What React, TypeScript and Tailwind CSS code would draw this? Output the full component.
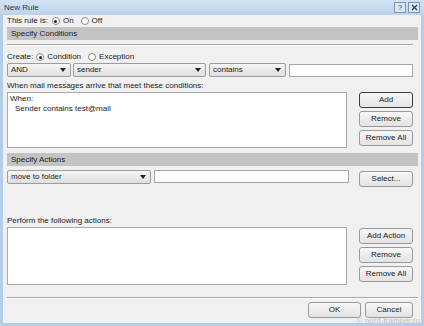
import React from "react";

function Radio({ checked }: { checked?: boolean }) {
	return (
		<span className="inline-flex w-[8px] h-[8px] rounded-full border border-[#8a8a8a] bg-white items-center justify-center mr-[3px]">
			{checked && <span className="w-[3px] h-[3px] rounded-full bg-[#222]" />}
		</span>
	);
}

function Dropdown({ label, className }: { label: string; className: string }) {
	return (
		<div
			className={
				"h-[14px] flex items-center justify-between pl-[3px] pr-[4px] border border-[#9c9c9c] rounded-[2px] bg-gradient-to-b from-[#f6f6f6] to-[#dedede] " +
				className
			}
		>
			<span>{label}</span>
			<svg width="6" height="4" viewBox="0 0 6 4">
				<path d="M0 0h6L3 4z" fill="#222" />
			</svg>
		</div>
	);
}

function Button({ label, def, className }: { label: string; def?: boolean; className?: string }) {
	return (
		<div
			className={
				"h-[16px] flex items-center justify-center rounded-[3px] border bg-gradient-to-b from-[#f7f7f7] to-[#e3e3e3] " +
				(def ? "border-[#3d3d3d]" : "border-[#9a9a9a]") +
				" " +
				(className ?? "w-[54px]")
			}
		>
			{label}
		</div>
	);
}

function Bar({ title }: { title: string }) {
	return <div className="h-[13px] bg-[#c3c3c3] flex items-center pl-[4px]">{title}</div>;
}

export default function App() {
	return (
		<div
			className="relative w-[424px] h-[326px] bg-[#b4cde8] flex flex-col text-[8px] leading-none text-[#1b1b1b]"
			style={{ fontFamily: '"Liberation Sans", Arial, sans-serif' }}
		>
			{/* title bar */}
			<div className="h-[15px] flex items-center justify-between pl-[4px] pr-[4px] bg-gradient-to-b from-[#d3e3f5] to-[#bcd3ec]">
				<span className="text-[#1d3550]">New Rule</span>
				<div className="flex gap-[2px]">
					<div className="w-[12px] h-[11px] border border-[#7d94b0] bg-[#dde8f4] flex items-center justify-center text-[8px] text-[#2a3e55]">?</div>
					<div className="w-[12px] h-[11px] border border-[#7d94b0] bg-[#dde8f4] flex items-center justify-center">
						<svg width="7" height="7" viewBox="0 0 7 7">
							<path d="M1 1l5 5M6 1L1 6" stroke="#2a3e55" strokeWidth="1.2" />
						</svg>
					</div>
				</div>
			</div>

			{/* body */}
			<div className="flex-1 mx-[3px] mb-[3px] bg-[#f0f0f0] flex flex-col pl-[4px] pr-[3px]">
				<div className="h-[12px] flex items-center">
					<span className="mr-[4px]">This rule is:</span>
					<Radio checked />
					<span className="mr-[7px]">On</span>
					<Radio />
					<span>Off</span>
				</div>
				<Bar title="Specify Conditions" />
				<div className="mt-[4px] mr-[5px] h-[2px] border-t border-[#a8a8a8] border-b border-b-white" />

				<div className="mt-[5px] h-[12px] flex items-center">
					<span className="mr-[3px]">Create:</span>
					<Radio checked />
					<span className="mr-[7px]">Condition</span>
					<Radio />
					<span>Exception</span>
				</div>
				<div className="h-[14px] flex items-center">
					<Dropdown label="AND" className="w-[64px]" />
					<Dropdown label="sender" className="w-[133px] ml-[2px]" />
					<Dropdown label="contains" className="w-[77px] ml-[3px]" />
					<div className="w-[124px] h-[13px] ml-[3px] border border-[#a6a6a6] bg-white" />
				</div>

				<div className="mt-[2px] h-[13px] flex items-center">When mail messages arrive that meet these conditions:</div>
				<div className="h-[56px] flex">
					<div className="w-[340px] h-[56px] border border-[#a8a8a8] bg-white pl-[2px] pt-[2px]">
						<div>When:</div>
						<div className="pl-[5px] mt-[2px]">Sender contains test@mail</div>
					</div>
					<div className="ml-[12px] flex flex-col gap-[3px]">
						<Button label="Add" def />
						<Button label="Remove" />
						<Button label="Remove All" />
					</div>
				</div>

				<div className="mt-[5px]">
					<Bar title="Specify Actions" />
				</div>
				<div className="mt-[4px] h-[17px] flex items-start">
					<Dropdown label="move to folder" className="w-[144px]" />
					<div className="w-[195px] h-[13px] ml-[3px] border border-[#a6a6a6] bg-white" />
					<div className="ml-[10px] mt-[1px]">
						<Button label="Select..." />
					</div>
				</div>

				<div className="mt-[27px] h-[13px] flex items-center">Perform the following actions:</div>
				<div className="h-[58px] flex">
					<div className="w-[340px] h-[58px] border border-[#a8a8a8] bg-white" />
					<div className="ml-[12px] mt-[1px] flex flex-col gap-[3px]">
						<Button label="Add Action" />
						<Button label="Remove" />
						<Button label="Remove All" />
					</div>
				</div>

				<div className="mt-[12px] h-[2px] border-t border-[#a8a8a8] border-b border-b-white" />
				<div className="mt-[3px] h-[16px] flex justify-end pr-[5px] gap-[4px]">
					<Button label="OK" className="w-[53px]" />
					<Button label="Cancel" className="w-[48px]" />
				</div>
			</div>

			<span className="absolute right-[4px] bottom-[1px] text-[8px] text-[#bdbdbd]">© nord-tramper.ru</span>
		</div>
	);
}
